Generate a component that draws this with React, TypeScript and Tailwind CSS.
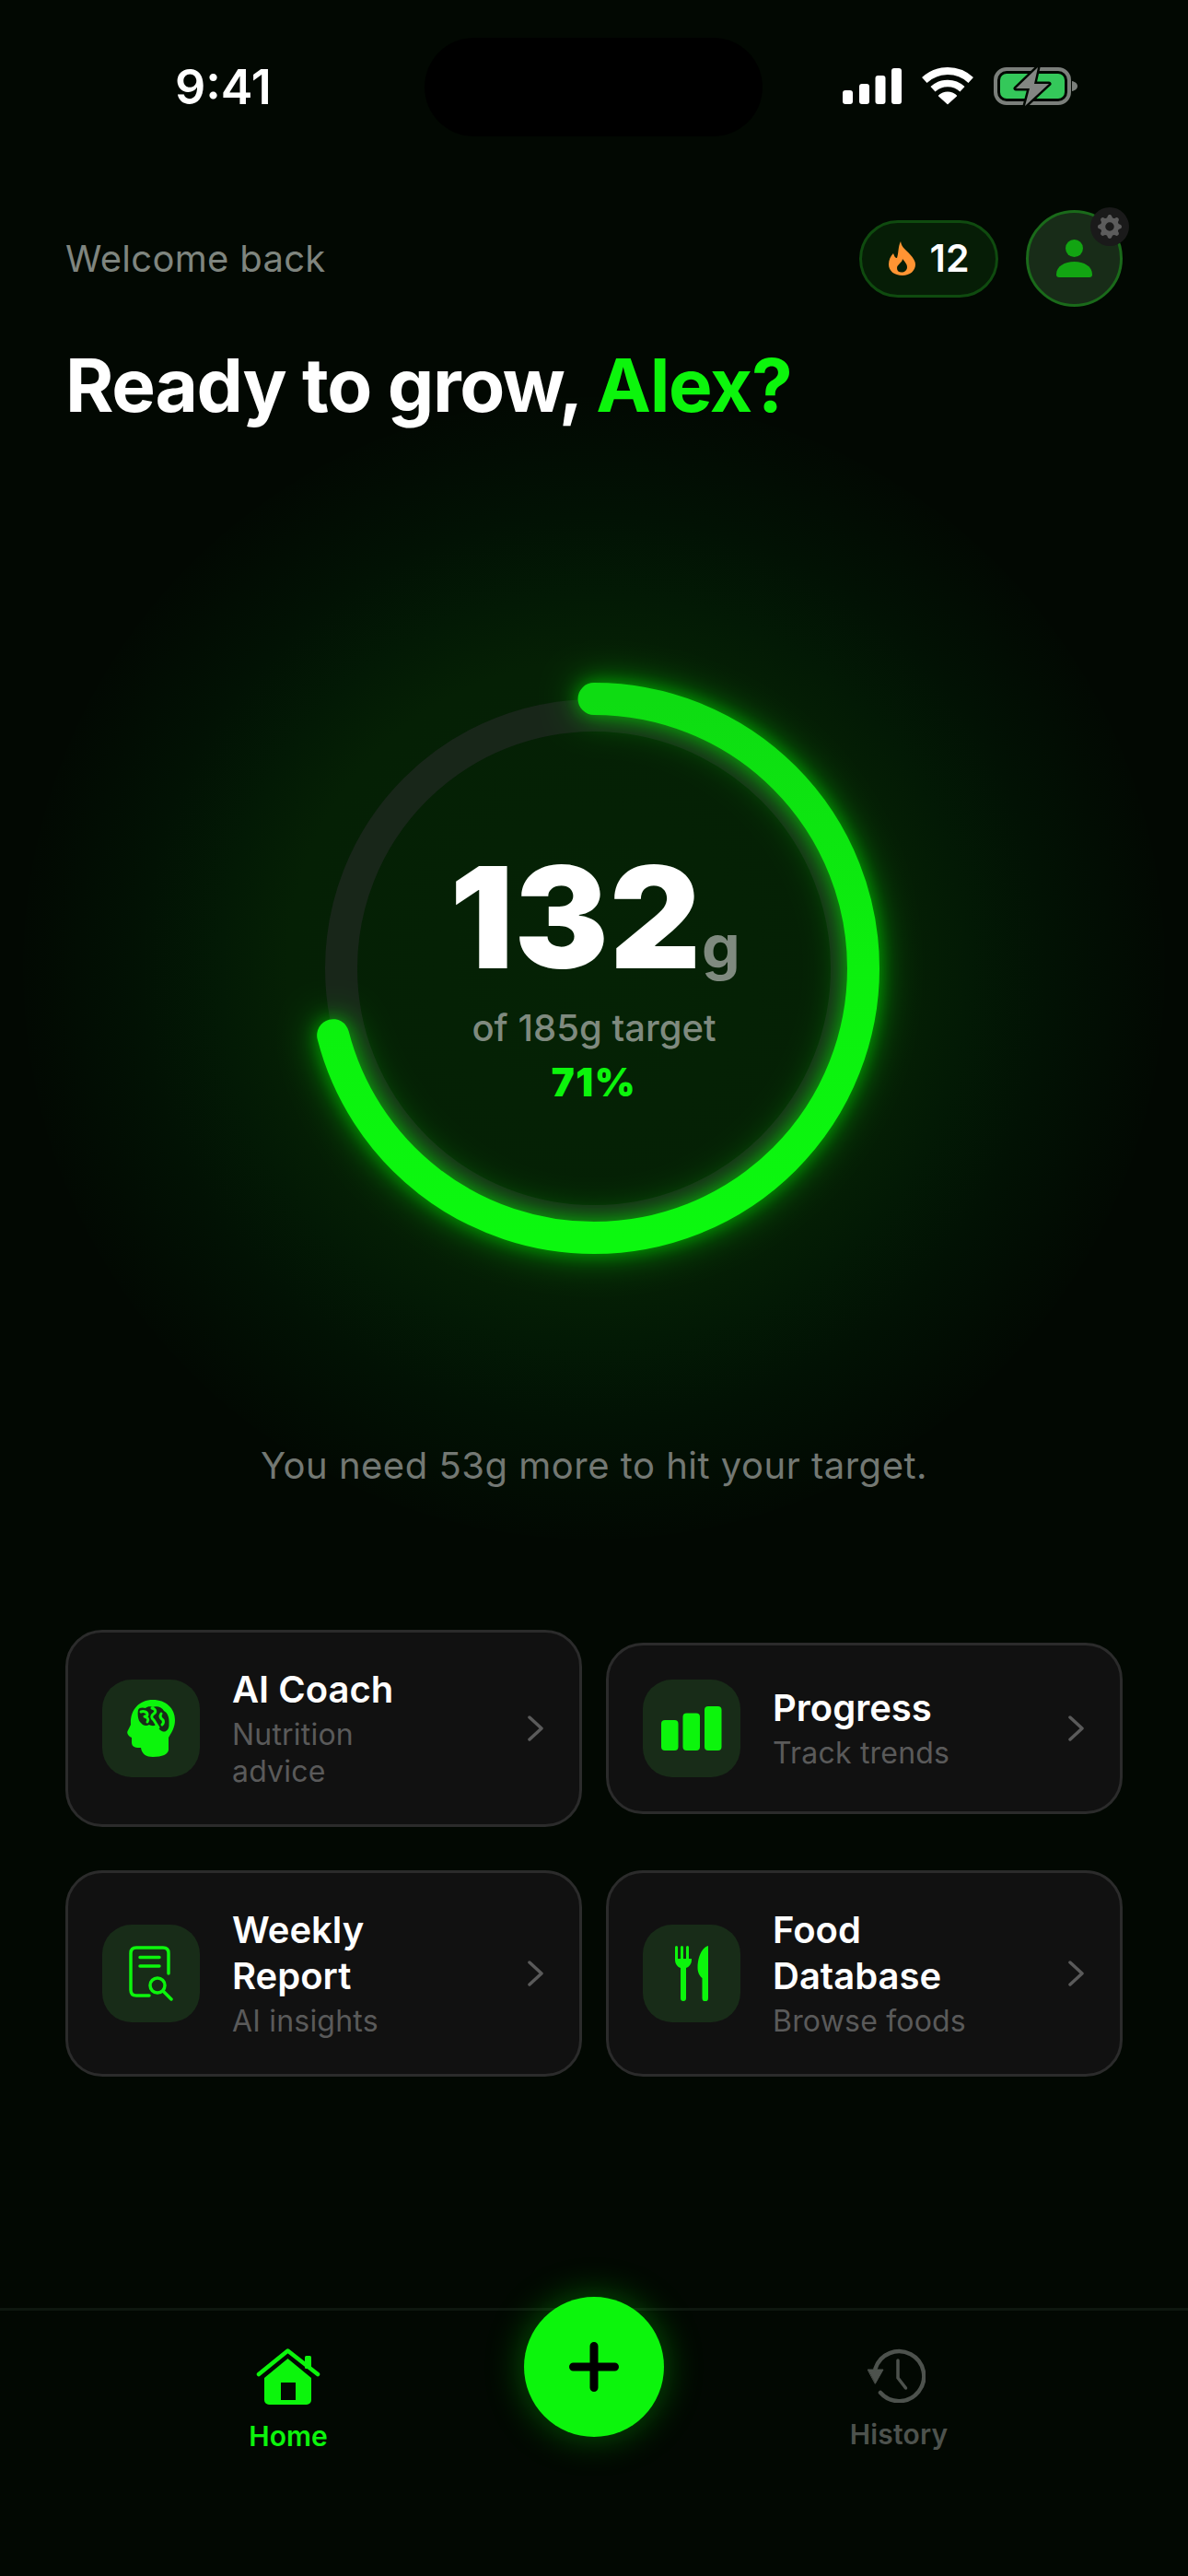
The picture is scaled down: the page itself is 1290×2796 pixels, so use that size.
import React from 'react';
import { BsGearFill } from 'react-icons/bs';

function CellBars() {
  return (
    <svg width="64" height="39" viewBox="0 0 64 39" fill="#fff">
      <rect x="0" y="24" width="11" height="15" rx="3" />
      <rect x="18" y="17" width="11" height="22" rx="3" />
      <rect x="35.5" y="8" width="11" height="31" rx="3" />
      <rect x="53" y="0" width="11" height="39" rx="3" />
    </svg>
  );
}

function Wifi() {
  return (
    <svg width="56" height="41" viewBox="0 0 56 41" fill="none" stroke="#fff">
      <path d="M2.8 14A37 37 0 0 1 53.2 14" strokeWidth="8" />
      <path d="M12 23.8A23.5 23.5 0 0 1 44 23.8" strokeWidth="7.5" />
      <path d="M28 39.5L18.6 31A14 14 0 0 1 37.4 31Z" fill="#fff" strokeWidth="1.5" strokeLinejoin="round" />
    </svg>
  );
}

function Battery() {
  return (
    <svg width="92" height="44" viewBox="0 0 92 44" fill="none">
      <rect x="2" y="3" width="80" height="37" rx="12" stroke="#7b7f7b" strokeWidth="4" />
      <rect x="7" y="8" width="70" height="27" rx="7" fill="#34c85a" />
      <path d="M85 16c3 .6 6 2.500 6 5.500s-3 5-6 5.500z" fill="#7b7f7b" />
      <path
        d="M48 1L24 24H39L34 43L60 19H44Z"
        fill="#838683"
        stroke="#020802"
        strokeWidth="5"
        strokeLinejoin="round"
        paintOrder="stroke"
      />
    </svg>
  );
}

function Flame() {
  return (
    <svg width="29" height="37" viewBox="0 0 29 37" fill="#ff9433">
      <path
        fillRule="evenodd"
        d="M13 0C14 7 19 9 23 14C27 18 29 22 29 25C29 32 23 37 15 37C6 37 0 32 0 25C0 20 2 16 5 13C6 16 7 18 9 18C11 12 10 6 13 0ZM15 19C15 23 9 25 9 29C9 32 11 33.500 14 33.500C17 33.500 20 31.500 20 28C20 24 17 22 15 19Z"
      />
    </svg>
  );
}

function Person() {
  return (
    <svg width="39" height="41" viewBox="0 0 39 41" fill="#12a512">
      <circle cx="19.500" cy="9.500" r="9.500" />
      <path d="M0 38C0 29 9 24 19.500 24S39 29 39 38C39 40 38 41 36 41H3C1 41 0 40 0 38Z" />
    </svg>
  );
}

function HeadBrain() {
  return (
    <svg width="52" height="62" viewBox="0 0 52 62">
      <path
        fill="#0cf50c"
        d="M28 0C42 0 52 9 52 22C52 30 48 36 45 41V54C45 59 38 62 28 62C21 62 16 59 15 52C10 52 5 52 5 46V41C1 39-1 36 1 33L4 27C3 12 12 0 28 0Z"
      />
      {/* brain cut out of the head, lobes drawn back in */}
      <path
        fill="#182c18"
        d="M12 11C13 8 17 8 20 9C22 7 26 7 28 8C32 6 38 8 40 12C44 14 46 19 45.500 26C46 33 41 36 38 34C35 33 33 29 31 27C29 29 26 28 24 27C21 29 17 28 15 25C12 23 11 16 12 11Z"
      />
      <g fill="none" stroke="#0cf50c" strokeWidth="3" strokeLinecap="round" strokeLinejoin="round">
        <path d="M15 13C18 12 22 13 22 16C22 18 19 18 19 18C22 19 24 21 22 24" />
        <path d="M27 9C31 10 32 13 29 15C26 17 26 20 29 22L34 30" />
        <path d="M37 15C35 18 36 20 39 22C40 24 39 26 38 27" />
      </g>
    </svg>
  );
}

function ReportSearch() {
  return (
    <svg width="48" height="60" viewBox="0 0 48 60" fill="none" stroke="#0cf50c" strokeWidth="3.500" strokeLinecap="round">
      <path d="M22 54H8C4 54 2 52 2 48V8C2 4 4 2 8 2H37C41 2 43 4 43 8V30" />
      <path d="M12 12.500H33M12 22H33" />
      <circle cx="31" cy="43" r="8" />
      <path d="M37 49L46 58" />
    </svg>
  );
}

function Bars() {
  return (
    <svg width="66" height="48" viewBox="0 0 66 48" fill="#0cf50c">
      <rect x="0" y="15" width="18.500" height="33" rx="4" />
      <rect x="23.500" y="7.500" width="18.500" height="40.500" rx="4" />
      <rect x="47" y="0" width="18.500" height="48" rx="4" />
    </svg>
  );
}

function Cutlery() {
  return (
    <svg width="36" height="60" viewBox="0 0 36 60" fill="#0cf50c">
      <path d="M0 1.500a1.500 1.500 0 0 1 3 0V14h3V1.500a1.500 1.500 0 0 1 3 0V14h3V1.500a1.500 1.500 0 0 1 3 0V14h3V1.500V15C18 20 15 23 12 24V57a3 3 0 0 1-6 0V24C3 23 0 20 0 15Z" />
      <path d="M36 0C29 2 24.500 12 24.500 24C24.500 29 27 33 29.500 35V57a3.250 3.250 0 0 0 6.500 0Z" />
    </svg>
  );
}

function Chevron() {
  return (
    <svg width="17" height="28" viewBox="0 0 17 28" fill="none" stroke="#5a5a5a" strokeWidth="3.500" strokeLinecap="round" strokeLinejoin="round">
      <path d="M2 2L15 14L2 26" />
    </svg>
  );
}

function HomeIcon() {
  return (
    <svg width="70" height="62" viewBox="0 0 70 62" fill="#0cf50c">
      <rect x="53" y="8" width="7" height="14" rx="1.500" />
      <path d="M3 28L34.500 2.500L67 28" fill="none" stroke="#0cf50c" strokeWidth="4.500" strokeLinecap="round" strokeLinejoin="round" />
      <path fillRule="evenodd" d="M34.500 11L60 32V56a5 5 0 0 1-5 5H14a5 5 0 0 1-5-5V32ZM27 37V56H43V37Z" />
    </svg>
  );
}

function HistoryIcon() {
  return (
    <svg width="63" height="59" viewBox="0 0 63 59" fill="none" stroke="#4d524d" strokeWidth="4.500" strokeLinecap="round" strokeLinejoin="round" className="mr-[5px]">
      <path d="M8.500 22A27 27 0 1 1 14 48" />
      <path d="M0.500 23H17L8.500 38Z" fill="#4d524d" strokeWidth="1" />
      <path d="M33 13V32L41.500 43" strokeWidth="3.500" />
    </svg>
  );
}

function Ring() {
  return (
    <svg width="800" height="800" viewBox="0 0 800 800" fill="none" className="absolute inset-0 overflow-visible">
      <defs>
        <filter id="glowWide" x="-30%" y="-30%" width="160%" height="160%">
          <feGaussianBlur stdDeviation="20" />
        </filter>
        <filter id="glowNear" x="-30%" y="-30%" width="160%" height="160%">
          <feGaussianBlur stdDeviation="9" />
        </filter>
        <linearGradient id="arc" x1="1" y1="0" x2="0" y2="0">
          <stop offset="0" stopColor="#0edc12" />
          <stop offset="0.5" stopColor="#0cf00e" />
          <stop offset="1" stopColor="#0cf80f" />
        </linearGradient>
      </defs>
      <circle cx="400" cy="400" r="274.500" stroke="#182619" strokeWidth="35" />
      <g transform="rotate(-90 400 400)">
        <circle cx="400" cy="400" r="292.500" stroke="#0cf50c" strokeOpacity="0.45" strokeWidth="38" strokeLinecap="round" pathLength={100} strokeDasharray="71 100" filter="url(#glowWide)" />
        <circle cx="400" cy="400" r="292.500" stroke="#0cf50c" strokeOpacity="0.45" strokeWidth="36" strokeLinecap="round" pathLength={100} strokeDasharray="71 100" filter="url(#glowNear)" />
        <circle cx="400" cy="400" r="292.500" stroke="url(#arc)" strokeWidth="35" strokeLinecap="round" pathLength={100} strokeDasharray="71 100" />
      </g>
    </svg>
  );
}

const cards = [
  { title: 'AI Coach', sub: 'Nutrition advice', icon: <HeadBrain /> },
  { title: 'Progress', sub: 'Track trends', icon: <Bars /> },
  { title: 'Weekly Report', sub: 'AI insights', icon: <ReportSearch /> },
  { title: 'Food Database', sub: 'Browse foods', icon: <Cutlery /> },
];

function ActionCard({ title, sub, icon }: { title: string; sub: string; icon: React.ReactNode }) {
  return (
    <div className="flex items-center gap-[35px] rounded-[40px] border-[3px] border-[#2b2b2b] bg-[#111111] p-[37px]">
      <div className="flex h-[106px] w-[106px] shrink-0 items-center justify-center rounded-[32px] bg-[#182c18]">{icon}</div>
      <div className="flex w-[220px] flex-col gap-[4px]">
        <div className="text-[40px] leading-[50px] font-semibold text-white">{title}</div>
        <div className="text-[32px] leading-[40px] tracking-[0.2px] text-[#5a5a5a]">{sub}</div>
      </div>
      <div className="ml-auto mr-[2px] flex"><Chevron /></div>
    </div>
  );
}

export default function App() {
  return (
    <div className="relative flex h-[2796px] w-[1290px] flex-col overflow-hidden bg-[#020802] font-['Inter',sans-serif]">
      {/* Status bar */}
      <div className="relative flex h-[190px] items-center justify-between pl-[190px] pr-[119px]">
        <span className="text-[52px] leading-none font-semibold text-white">9:41</span>
        <div className="absolute left-[461px] top-[41px] h-[107px] w-[367px] rounded-full bg-black" />
        <div className="flex items-center gap-[22px] pb-[3px]">
          <CellBars />
          <Wifi />
          <Battery />
        </div>
      </div>

      {/* Header */}
      <div className="relative z-10 mt-[38px] flex h-[105px] items-center justify-between px-[71px]">
        <span className="text-[40px] leading-[48px] tracking-[0.3px] text-[#7f857f]">Welcome back</span>
        <div className="flex items-center gap-[30px]">
          <div className="flex h-[84px] w-[151px] items-center justify-center gap-[16px] rounded-full border-[3px] border-[#0f4a0f] bg-[#061d06]">
            <Flame />
            <span className="text-[41px] leading-none font-semibold text-white">12</span>
          </div>
          <div className="relative flex h-[105px] w-[105px] items-center justify-center rounded-full border-[3px] border-[#1a6a1a] bg-[#182c18]">
            <Person />
            <div className="absolute -right-[10px] -top-[6px] flex h-[42px] w-[42px] items-center justify-center rounded-full bg-[#1a1a1a] text-[26px] text-[#5c5c5c]">
              <BsGearFill />
            </div>
          </div>
        </div>
      </div>

      <h1 className="relative z-10 mt-[37px] px-[71px] text-[80px] leading-[96px] font-bold tracking-[-1.3px] text-white">
        Ready to grow, <span className="text-[#0cf50c]">Alex?</span>
      </h1>

      {/* Ring */}
      <div className="relative mx-auto mt-[185px] h-[800px] w-[800px] shrink-0">
        <div className="absolute -inset-[220px] rounded-full bg-[radial-gradient(circle,#052205_0%,#052005_38%,#031a05_46%,#021204_56%,#020802_72%)]" />
        <Ring />
        <div className="absolute inset-0 flex flex-col items-center pt-[265px]">
          <div className="flex items-baseline pl-[2px]">
            <span className="text-[153px] leading-[160px] font-black tracking-[1px] text-white">132</span>
            <span className="text-[66px] leading-none font-bold text-[#7f8a7f]">g</span>
          </div>
          <div className="mt-[17px] text-[40px] leading-[46px] font-medium text-[#7f8a7f]">of 185g target</div>
          <div className="mt-[13px] text-[42px] leading-[46px] font-black tracking-[1.5px] text-[#0cf50c]">71%</div>
        </div>
      </div>

      <p className="relative mt-[112px] text-center text-[40px] leading-[56px] tracking-[0.5px] text-[#737873]">You need 53g more to hit your target.</p>

      {/* Quick actions */}
      <div className="relative mt-[150px] grid grid-cols-2 items-center gap-x-[26px] gap-y-[47px] px-[71px]">
        {cards.map((c) => (
          <ActionCard key={c.title} title={c.title} sub={c.sub} icon={c.icon} />
        ))}
      </div>

      {/* Bottom nav */}
      <div className="relative mt-auto flex h-[291px] justify-between border-t-[3px] border-[#0e170f] pl-[213px] pr-[214px] pt-[41px]">
        <div className="flex w-[200px] flex-col items-center gap-[15px]">
          <HomeIcon />
          <span className="text-[30px] leading-[36px] font-semibold text-[#0cf50c]">Home</span>
        </div>
        <div className="absolute left-[569px] -top-[15px] flex h-[152px] w-[152px] items-center justify-center rounded-full bg-[#0cf50c] shadow-[0_0_40px_rgba(12,245,12,0.35)]">
          <svg width="54" height="54" viewBox="0 0 54 54" stroke="#000" strokeWidth="9" strokeLinecap="round">
            <path d="M27 4.500V49.500M4.500 27H49.500" />
          </svg>
        </div>
        <div className="flex w-[200px] flex-col items-center gap-[16px]">
          <HistoryIcon />
          <span className="text-[30px] leading-[36px] font-semibold tracking-[0.2px] text-[#4d524d]">History</span>
        </div>
      </div>
    </div>
  );
}
